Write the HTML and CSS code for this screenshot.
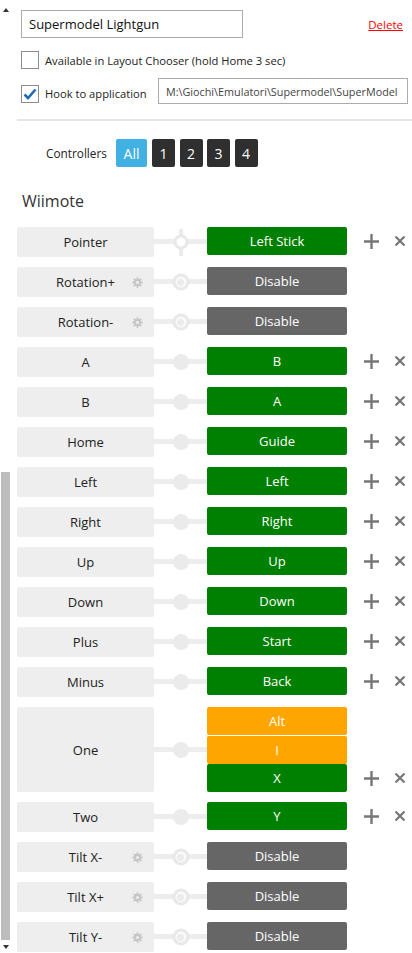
FILE: index.html
```html
<!DOCTYPE html>
<html lang="it">
<head>
    <meta charset="UTF-8">
    <meta name="viewport" content="width=device-width, initial-scale=1.0">
    <title>Supermodel Lightgun</title>
    <link rel="stylesheet" href="styles.css">
</head>
<body>
    <svg class="defs" width="0" height="0">
        <symbol id="gear" viewBox="0 0 12 12">
            <g fill="#c6c6c6">
                <rect x="5" y="0.3" width="2" height="11.4"/>
                <rect x="0.3" y="5" width="11.4" height="2"/>
                <rect x="5" y="0.3" width="2" height="11.4" transform="rotate(45 6 6)"/>
                <rect x="5" y="0.3" width="2" height="11.4" transform="rotate(-45 6 6)"/>
                <circle cx="6" cy="6" r="3.8"/>
            </g>
            <circle cx="6" cy="6" r="1.7" fill="#eeeeee"/>
        </symbol>
        <symbol id="plus" viewBox="0 0 15 15">
            <path d="M7.5 0v15M0 7.5h15" stroke="#777" stroke-width="2.4"/>
        </symbol>
        <symbol id="cross" viewBox="0 0 10 10">
            <path d="M0.5 0.5l9 9M9.5 0.5l-9 9" stroke="#777" stroke-width="2.2"/>
        </symbol>
    </svg>

    <div class="scroll-up"></div>
    <div class="scroll-thumb"></div>
    <div class="scroll-down"></div>

    <div class="head">
        <div class="name-row">
            <input class="name-input" type="text" value="Supermodel Lightgun">
            <a class="delete" href="#">Delete</a>
        </div>
        <label class="check-row">
            <span class="box"></span>
            <span>Available in Layout Chooser (hold Home 3 sec)</span>
        </label>
        <div class="check-row hook">
            <span class="box checked">
                <svg width="14" height="12" viewBox="0 0 14 12"><path d="M1.5 6.5l3.5 3.5 7.5-8.5" fill="none" stroke="#1d6db6" stroke-width="2.6"/></svg>
            </span>
            <span>Hook to application</span>
            <input class="path-input" type="text" value="M:\Giochi\Emulatori\Supermodel\SuperModel">
        </div>
    </div>

    <hr class="sep">

    <div class="controllers">
        <span class="ctl-label">Controllers</span>
        <span class="ctl all">All</span>
        <span class="ctl">1</span>
        <span class="ctl">2</span>
        <span class="ctl">3</span>
        <span class="ctl">4</span>
    </div>

    <h2 class="section">Wiimote</h2>

    <div class="map">
        <div class="row">
            <div class="src">Pointer</div>
            <div class="link"><span class="knob pointer"></span></div>
            <div class="dst green">Left Stick</div>
            <div class="tools"><svg class="plus"><use href="#plus"/></svg><svg class="cross"><use href="#cross"/></svg></div>
        </div>
        <div class="row">
            <div class="src">Rotation+<svg class="gear"><use href="#gear"/></svg></div>
            <div class="link"><span class="knob ring"></span></div>
            <div class="dst off">Disable</div>
        </div>
        <div class="row">
            <div class="src">Rotation-<svg class="gear"><use href="#gear"/></svg></div>
            <div class="link"><span class="knob ring"></span></div>
            <div class="dst off">Disable</div>
        </div>
        <div class="row">
            <div class="src">A</div>
            <div class="link"><span class="knob dot"></span></div>
            <div class="dst green">B</div>
            <div class="tools"><svg class="plus"><use href="#plus"/></svg><svg class="cross"><use href="#cross"/></svg></div>
        </div>
        <div class="row">
            <div class="src">B</div>
            <div class="link"><span class="knob dot"></span></div>
            <div class="dst green">A</div>
            <div class="tools"><svg class="plus"><use href="#plus"/></svg><svg class="cross"><use href="#cross"/></svg></div>
        </div>
        <div class="row">
            <div class="src">Home</div>
            <div class="link"><span class="knob dot"></span></div>
            <div class="dst green">Guide</div>
            <div class="tools"><svg class="plus"><use href="#plus"/></svg><svg class="cross"><use href="#cross"/></svg></div>
        </div>
        <div class="row">
            <div class="src">Left</div>
            <div class="link"><span class="knob dot"></span></div>
            <div class="dst green">Left</div>
            <div class="tools"><svg class="plus"><use href="#plus"/></svg><svg class="cross"><use href="#cross"/></svg></div>
        </div>
        <div class="row">
            <div class="src">Right</div>
            <div class="link"><span class="knob dot"></span></div>
            <div class="dst green">Right</div>
            <div class="tools"><svg class="plus"><use href="#plus"/></svg><svg class="cross"><use href="#cross"/></svg></div>
        </div>
        <div class="row">
            <div class="src">Up</div>
            <div class="link"><span class="knob dot"></span></div>
            <div class="dst green">Up</div>
            <div class="tools"><svg class="plus"><use href="#plus"/></svg><svg class="cross"><use href="#cross"/></svg></div>
        </div>
        <div class="row">
            <div class="src">Down</div>
            <div class="link"><span class="knob dot"></span></div>
            <div class="dst green">Down</div>
            <div class="tools"><svg class="plus"><use href="#plus"/></svg><svg class="cross"><use href="#cross"/></svg></div>
        </div>
        <div class="row">
            <div class="src">Plus</div>
            <div class="link"><span class="knob dot"></span></div>
            <div class="dst green">Start</div>
            <div class="tools"><svg class="plus"><use href="#plus"/></svg><svg class="cross"><use href="#cross"/></svg></div>
        </div>
        <div class="row">
            <div class="src">Minus</div>
            <div class="link"><span class="knob dot"></span></div>
            <div class="dst green">Back</div>
            <div class="tools"><svg class="plus"><use href="#plus"/></svg><svg class="cross"><use href="#cross"/></svg></div>
        </div>
        <div class="row multi">
            <div class="src">One</div>
            <div class="link"><span class="knob dot"></span></div>
            <div class="stack">
                <div class="dst orange">Alt</div>
                <div class="dst orange">I</div>
                <div class="dst green">X</div>
            </div>
            <div class="tools"><svg class="plus"><use href="#plus"/></svg><svg class="cross"><use href="#cross"/></svg></div>
        </div>
        <div class="row">
            <div class="src">Two</div>
            <div class="link"><span class="knob dot"></span></div>
            <div class="dst green">Y</div>
            <div class="tools"><svg class="plus"><use href="#plus"/></svg><svg class="cross"><use href="#cross"/></svg></div>
        </div>
        <div class="row">
            <div class="src">Tilt X-<svg class="gear"><use href="#gear"/></svg></div>
            <div class="link"><span class="knob ring"></span></div>
            <div class="dst off">Disable</div>
        </div>
        <div class="row">
            <div class="src">Tilt X+<svg class="gear"><use href="#gear"/></svg></div>
            <div class="link"><span class="knob ring"></span></div>
            <div class="dst off">Disable</div>
        </div>
        <div class="row">
            <div class="src">Tilt Y-<svg class="gear"><use href="#gear"/></svg></div>
            <div class="link"><span class="knob ring"></span></div>
            <div class="dst off">Disable</div>
        </div>
    </div>
</body>
</html>
```

FILE: styles.css
```css
body {
    margin: 0;
    width: 412px;
    height: 953px;
    overflow: hidden;
    position: relative;
    background: #fff;
    color: #222;
    font-family: "Segoe UI", "Open Sans", sans-serif;
    font-size: 13px;
}
.defs {
    position: absolute;
}

/* scrollbar on the left */
.scroll-thumb {
    position: absolute;
    left: 1px;
    top: 472px;
    width: 9px;
    height: 468px;
    background: #bdbdbd;
}
.scroll-up, .scroll-down {
    position: absolute;
    left: 3px;
    width: 0;
    height: 0;
    border-left: 3px solid transparent;
    border-right: 3px solid transparent;
}
.scroll-up {
    top: 8px;
    border-bottom: 4px solid #333;
}
.scroll-down {
    top: 945px;
    border-top: 4px solid #333;
}

/* header */
.head {
    padding: 10px 4px 0 21px;
}
.name-row {
    display: flex;
    justify-content: space-between;
    align-items: center;
}
.name-input, .path-input {
    box-sizing: border-box;
    border: 1px solid #ababab;
    font-family: "Segoe UI", "Open Sans", sans-serif;
    outline: none;
    margin: 0;
}
.name-input {
    width: 222px;
    height: 28px;
    padding: 0 7px;
    font-size: 13px;
    color: #111;
}
.delete {
    color: #f00;
    margin-right: 5px;
    font-size: 11.5px;
}
.check-row {
    display: flex;
    align-items: center;
    gap: 6px;
    margin-top: 13px;
    font-size: 11.2px;
    color: #222;
    white-space: nowrap;
}
.check-row.hook {
    margin-top: 9px;
    align-items: flex-end;
}
.box {
    flex-shrink: 0;
    box-sizing: border-box;
    width: 18px;
    height: 18px;
    border: 1px solid #8c8c8c;
    background: #fff;
    display: flex;
    align-items: center;
    justify-content: center;
}
.hook .box {
    margin-bottom: 1px;
}
.hook span {
    line-height: 20px;
}
.path-input {
    flex-shrink: 0;
    margin-left: auto;
    width: 250px;
    height: 26px;
    padding: 0 7px;
    font-size: 10.8px;
    color: #444;
}
.sep {
    margin: 15px 0 0 17px;
    border: none;
    height: 2px;
    background: #e5e5e5;
}

/* controllers */
.controllers {
    display: flex;
    align-items: center;
    gap: 4.5px;
    margin-top: 18px;
    padding-left: 46px;
}
.ctl-label {
    width: 70px;
    margin-right: -4.5px;
    font-size: 11.8px;
}
.ctl {
    width: 23px;
    height: 28px;
    border-radius: 2px;
    background: #2f2f2f;
    color: #fff;
    font-size: 14px;
    display: flex;
    align-items: center;
    justify-content: center;
}
.ctl.all {
    width: 31px;
    margin-right: 0.5px;
    background: #41b0e2;
}
.section {
    margin: 22px 0 14px 22px;
    font-size: 16px;
    font-weight: normal;
    line-height: 24px;
    color: #333;
}

/* mapping rows */
.map {
    margin-left: 17px;
    display: flex;
    flex-direction: column;
    gap: 10px;
}
.row {
    display: grid;
    grid-template-columns: 137px 53px 140px auto;
    align-items: start;
}
.src {
    position: relative;
    height: 30px;
    border-radius: 2px;
    background: #eeeeee;
    display: flex;
    align-items: center;
    justify-content: center;
}
.gear {
    position: absolute;
    right: 11px;
    top: 10px;
    width: 11px;
    height: 11px;
}
.link {
    position: relative;
    height: 30px;
}
.link::before {
    content: "";
    position: absolute;
    left: 0;
    right: 0;
    top: 12px;
    height: 5px;
    background: #ededed;
}
.knob {
    position: absolute;
    left: 50%;
    top: 50%;
    transform: translate(-50%, -50%);
    border-radius: 50%;
    box-sizing: border-box;
}
.knob.dot {
    width: 16px;
    height: 16px;
    background: #ebebeb;
}
.knob.ring {
    width: 17px;
    height: 17px;
    border: 3px solid #e8e8e8;
    background: #f9f9f9;
}
.knob.ring::after {
    content: "";
    position: absolute;
    left: 50%;
    top: 50%;
    width: 7px;
    height: 7px;
    transform: translate(-50%, -50%);
    border-radius: 50%;
    background: #ececec;
}
.knob.pointer {
    z-index: 1;
    width: 15px;
    height: 15px;
    border: 3px solid #e8e8e8;
    background: #fff;
}
.link:has(.pointer)::after {
    content: "";
    position: absolute;
    left: 50%;
    top: 2px;
    bottom: 1px;
    width: 4px;
    margin-left: -2px;
    background: #ebebeb;
}
.dst {
    height: 28px;
    border-radius: 2px;
    color: #fff;
    display: flex;
    align-items: center;
    justify-content: center;
}
.green { background: #008000; }
.off { background: #666666; }
.orange { background: #ffa500; }
.tools {
    height: 28px;
    padding-left: 17px;
    display: flex;
    align-items: center;
    gap: 16px;
}
.plus {
    width: 15px;
    height: 15px;
}
.cross {
    width: 10px;
    height: 10px;
}
.row.multi .src, .row.multi .link {
    height: 85px;
}
.row.multi .link::before {
    top: 40px;
}
.stack {
    display: flex;
    flex-direction: column;
}
.stack .dst:first-child {
    margin-bottom: 1px;
}
.row.multi .tools {
    align-self: end;
}
```
